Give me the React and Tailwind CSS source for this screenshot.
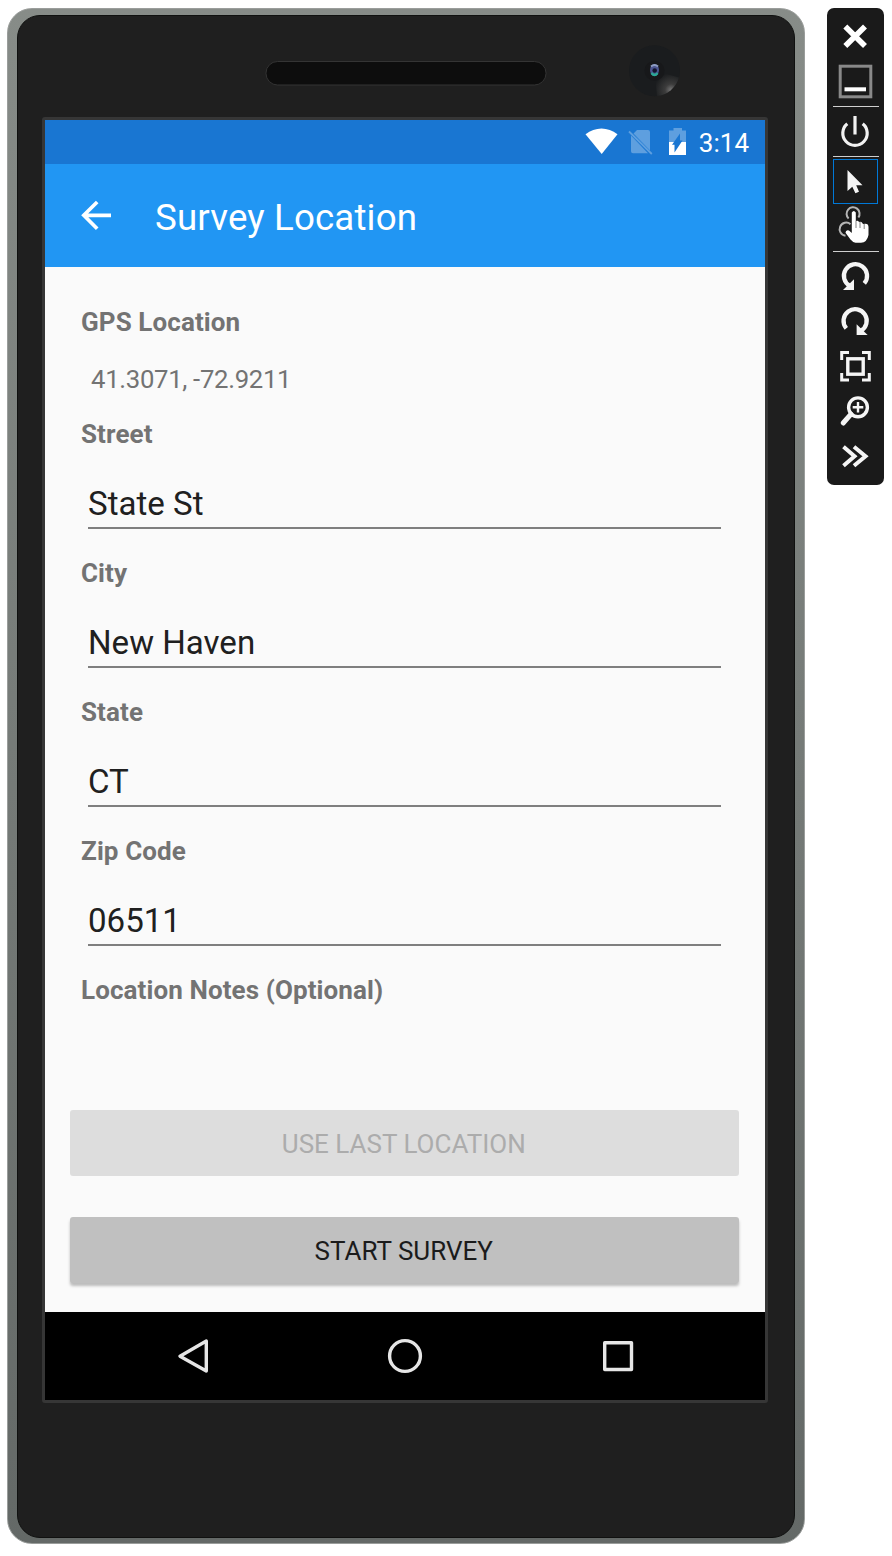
const font = "font-[Roboto,sans-serif]";

function Label({ children }) {
  return <div className="h-[30px] text-[26px] leading-[30px] font-bold tracking-[0.1px] text-[#737373]">{children}</div>;
}

function Field({ label, value }) {
  return (
    <div className="mb-[29px] px-9">
      <Label>{label}</Label>
      <div className="mr-2 ml-[7px] h-20 border-b-2 border-[#7f7f7f] pt-[34px] text-[33.1px] leading-[42px] text-[#202020]">{value}</div>
    </div>
  );
}

function StatusBar() {
  return (
    <div className="flex h-11 items-center justify-end bg-[#1976d2] pr-4">
      <svg className="mr-3 h-11 w-[103px]" viewBox="584 120 103 44">
        <path d="M585.5 134.3 Q593 128.8 601.5 128.6 Q610 128.8 617.5 134.3 L601.7 154Z" fill="#fff" />
        <path d="M637 130 H648 Q650 130 650 132 V150.5 L633.5 133.5Z M631 135.5 L648 153.3 H633 Q631 153.3 631 151.3Z" fill="#5e9fdf" />
        <path d="M629 131.5 L651.8 154" stroke="#5e9fdf" strokeWidth="1.8" />
        <path d="M673.5 128 H682 V130.5 H686 V142 H669 V130.5 H673.5Z" fill="#5e9fdf" />
        <path d="M669 142 H686 V155 H669Z" fill="#fff" />
        <path d="M680 133.5 V140.5 H682.5 L674.5 152.5 V144.8 H672Z" fill="#1976d2" />
      </svg>
      <span className="pt-0.5 text-[26px] leading-[30px] text-white">3:14</span>
    </div>
  );
}

function Screen() {
  return (
    <div className="ml-6 flex h-[1286px] w-[726px] flex-col rounded-[3px] border-[3px] border-[#363636] bg-[#fafafa]">
      <StatusBar />
      <div className="flex h-[103px] items-center bg-[#2196f3] pl-9 text-white">
        <svg className="mr-11 h-[34px] w-[30px]" viewBox="81 199 30 34" fill="none" stroke="#fff" strokeWidth="3.7">
          <path d="M97.2 202 L83.8 215.3 L97.2 228.8 M83.8 215.3 H111" />
        </svg>
        <h1 className="pt-1 text-[36.7px] leading-[44px] tracking-[0.15px]">Survey Location</h1>
      </div>
      <div className="h-[1045px] pt-10">
        <div className="px-9">
          <Label>GPS Location</Label>
          <div className="mt-[27px] mb-[25px] ml-2.5 h-[30px] text-[25.7px] leading-[30px] tracking-[-0.3px] text-[#737373]">41.3071, -72.9211</div>
        </div>
        <Field label="Street" value="State St" />
        <Field label="City" value="New Haven" />
        <Field label="State" value="CT" />
        <Field label="Zip Code" value="06511" />
        <div className="px-9">
          <Label>Location Notes (Optional)</Label>
        </div>
        <div className="mt-[105px] mr-[26px] ml-[25px] flex flex-col gap-[41px]">
          <button className="h-[66px] rounded-[3px] bg-[#dddddd] pt-0.5 pr-[1.5px] text-[26px] text-[#acacac]">USE LAST LOCATION</button>
          <button className="h-[66px] rounded-[3px] bg-[#c0c0c0] pt-0.5 pr-[1.5px] text-[26px] text-[#1b1b1b] shadow-[0_3px_3px_rgba(0,0,0,0.25)]">START SURVEY</button>
        </div>
      </div>
      <svg className="h-22 w-[720px] bg-black" viewBox="45 1312 720 88" fill="none" stroke="#e6e6e6" strokeWidth="3.4" strokeLinejoin="round">
        <path d="M206.3 1341 V1371 L180 1356.2Z" />
        <circle cx="405" cy="1356" r="15.4" />
        <rect x="604.7" y="1342.7" width="26.8" height="26.8" />
      </svg>
    </div>
  );
}

function Phone() {
  return (
    <div className="h-[1536px] w-[798px] rounded-[25px] border border-[#9a9d9b] bg-linear-to-b from-[#878c88] to-[#646967] pt-[6px] pr-[9px] pb-[5px] pl-[9px]">
      <div className="h-[1523px] rounded-[23px] border border-[#101110] bg-[#1f1f1f]">
        <svg className="block h-[101px] w-full" viewBox="18 16 776 101">
          <defs>
            <radialGradient id="glint" gradientUnits="userSpaceOnUse" cx="671" cy="90" r="17">
              <stop offset="0" stopColor="#757575" />
              <stop offset="0.35" stopColor="#3c3c3c" />
              <stop offset="1" stopColor="#1a1c1e" />
            </radialGradient>
          </defs>
          <rect x="266" y="61.5" width="280" height="23.5" rx="11.5" fill="#0d0d0d" stroke="#343434" />
          <circle cx="654.5" cy="70.7" r="25.5" fill="#1a1c1e" />
          <path d="M654.5 70.7 L679 77.5 A25.5 25.5 0 0 1 657 96Z" fill="url(#glint)" />
          <circle cx="654.5" cy="70.7" r="10" fill="#17181a" />
          <ellipse cx="654.5" cy="70" rx="4.5" ry="6" fill="#4c5590" />
          <path d="M651 66.5 Q654.5 63.5 658 66.5" stroke="#8e9dc0" strokeWidth="2" fill="none" />
          <path d="M651.5 73 Q654.5 77 657.5 73" stroke="#2aa795" strokeWidth="2.5" fill="none" />
          <circle cx="654.7" cy="70.5" r="2.3" fill="#13152e" />
        </svg>
        <Screen />
      </div>
    </div>
  );
}

const divider = <div className="mx-auto h-px w-[46px] bg-[#cfcfcf]" />;

function EmulatorToolbar() {
  return (
    <div className="h-[477px] w-[57px] overflow-hidden rounded-[7px] bg-[#1a1a1a]">
      <svg className="block h-[98px] w-[57px]" viewBox="827 8 57 98" fill="none">
        <path d="M845.3 26.5 L865 46 M865 26.5 L845.3 46" stroke="#fff" strokeWidth="5.6" />
        <rect x="840.2" y="66.2" width="30.6" height="30.6" stroke="#898989" strokeWidth="3" />
        <rect x="844.5" y="87.3" width="21.5" height="4" fill="#fff" />
      </svg>
      {divider}
      <svg className="block h-[49px] w-[57px]" viewBox="827 107 57 49" fill="none" stroke="#f2f2f2" strokeWidth="3.2">
        <path d="M847.3 123.7 A12.2 12.2 0 1 0 862.7 123.7 M855 116 V134.5" />
      </svg>
      {divider}
      <div className="mt-[2px] ml-[6px] h-[45px] w-[45px] border border-[#0078d7]">
        <svg className="block h-[43px] w-[43px]" viewBox="834 160 43 43">
          <path d="M847.5 170 V191 L852.3 186.8 L855.4 193.3 L859 191.8 L856.2 185.3 H862.5Z" fill="#f5f5f5" />
        </svg>
      </div>
      <svg className="block h-[47px] w-[57px]" viewBox="827 204 57 47" fill="none">
        <path d="M848.6 218.5 A6.5 6.5 0 1 1 858.4 217.5" stroke="#b5b5b5" strokeWidth="2" />
        <path d="M850.5 224.2 A6.6 6.6 0 1 0 845.5 235.8" stroke="#b5b5b5" strokeWidth="2" />
        <path d="M851.8 212.5 Q853.8 209.3 855.8 212.5 V221 Q858 220 859 222 Q861.5 221 863 224 Q868.5 222.5 868.5 227 V235 Q867 242.5 861 242.8 H855.5 Q853 242.5 850.5 239.5 L845.5 232.8 Q845.7 229.3 849 230.5 L851.8 233Z" fill="#fff" />
        <path d="M856 221 V228 M860 222 V228 M864.2 224 V229" stroke="#777" strokeWidth=".9" />
      </svg>
      {divider}
      <svg className="block h-[234px] w-[57px]" viewBox="827 252 57 234" fill="none" stroke="#f5f5f5">
        <path d="M850 286 A11.6 11.6 0 1 1 864.3 283.3" strokeWidth="4.3" />
        <path d="M843 290 H854 V279.3Z" fill="#f5f5f5" stroke="none" />
        <path d="M846.3 328.3 A11.6 11.6 0 1 1 860.6 331" strokeWidth="4.3" />
        <path d="M867.6 335 H856.6 V324.3Z" fill="#f5f5f5" stroke="none" />
        <path d="M841.7 360 V352.5 H849 M862 352.5 H869.3 V360 M869.3 373 V380 H862 M849 380 H841.7 V373" strokeWidth="3" />
        <rect x="847.8" y="358.8" width="15.4" height="15.4" strokeWidth="3.4" />
        <circle cx="858" cy="407.3" r="9.4" strokeWidth="3.4" />
        <path d="M858 402 V412.6 M852.7 407.3 H863.3" strokeWidth="2.4" />
        <path d="M851 414.2 L843.2 423" strokeWidth="5" strokeLinecap="round" />
        <path d="M843.5 446.7 L854.5 456.2 L843.5 465.7 M854 446.7 L865.5 456.2 L854 465.7" strokeWidth="4" />
      </svg>
    </div>
  );
}

export default function App() {
  return (
    <main className={`${font} flex h-[1556px] w-[892px] items-start gap-[22px] bg-white pt-2 pl-[7px]`}>
      <Phone />
      <EmulatorToolbar />
    </main>
  );
}
